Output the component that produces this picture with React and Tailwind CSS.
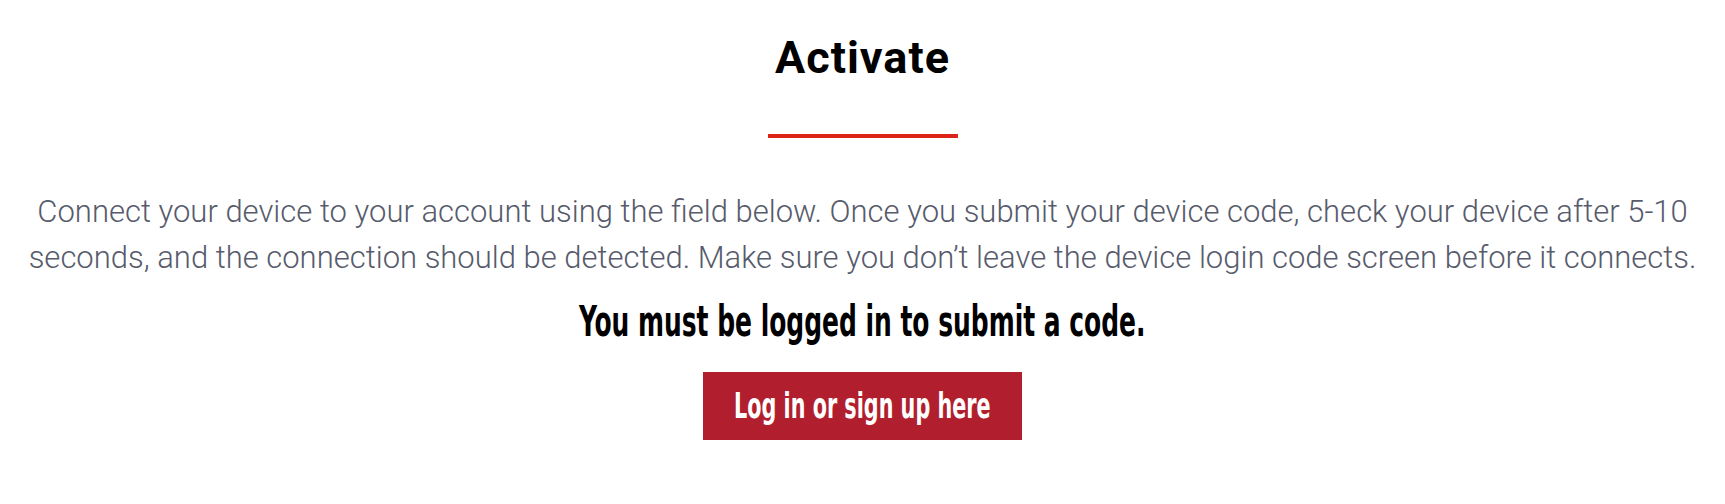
import React from "react";

export default function App() {
  return (
    <div className="w-[1725px] h-[504px] bg-white flex flex-col items-center pt-[35px]">
      <h1
        className="text-[45px] leading-[45px] font-bold tracking-[1px] text-black"
        style={{ fontFamily: "Roboto, 'Liberation Sans', sans-serif" }}
      >
        Activate
      </h1>
      <div className="mt-[54px] w-[190px] h-[4px] bg-[#dd2418]" />
      <p
        className="mt-[51px] w-[1690px] text-center text-[31px] leading-[46px] font-light text-[#575b6c]"
        style={{ fontFamily: "Roboto, 'Liberation Sans', sans-serif" }}
      >
        Connect your device to your account using the field below. Once you submit your device code, check your device after 5-10 seconds, and the connection should be detected. Make sure you don’t leave the device login code screen before it connects.
      </p>
      <h2
        className="mt-[17px] text-[42px] leading-[48px] font-bold text-black whitespace-nowrap"
        style={{ fontFamily: "'DejaVu Sans Condensed', 'DejaVu Sans', sans-serif" }}
      >
        <span className="inline-block scale-x-[0.66]">You must be logged in to submit a code.</span>
      </h2>
      <a
        href="#"
        className="mt-[26px] w-[319px] h-[68px] flex items-center justify-center bg-[#b11f2e] text-white text-[36px] leading-[40px] font-bold whitespace-nowrap"
        style={{ fontFamily: "'DejaVu Sans Condensed', 'DejaVu Sans', sans-serif" }}
      >
        <span className="inline-block scale-x-[0.64]">Log in or sign up here</span>
      </a>
    </div>
  );
}
